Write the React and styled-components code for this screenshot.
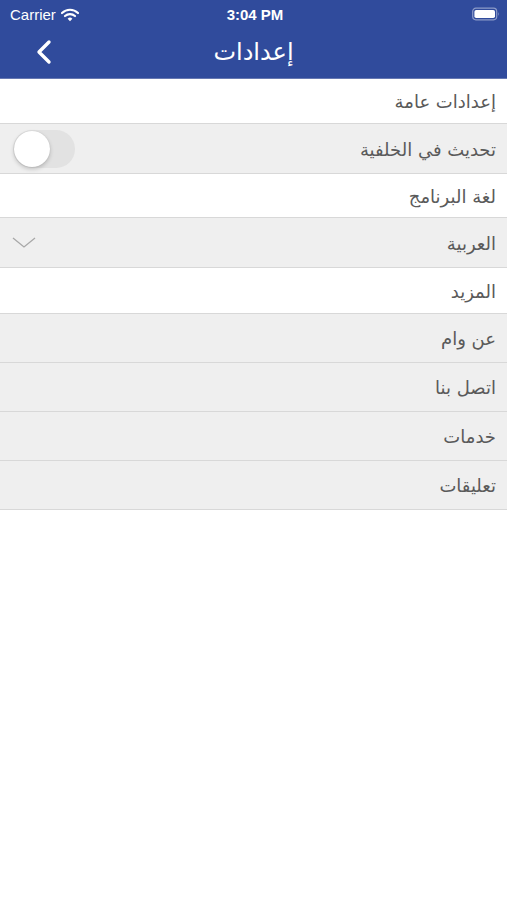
import React from 'react'
import styled, { createGlobalStyle } from 'styled-components';

const GlobalStyle = createGlobalStyle`
  html, body {
    margin: 0;
    padding: 0;
    background: #fff;
    font-family: "DejaVu Sans", "Noto Sans", sans-serif;
  }
`;

const Page = styled.div`
  width: 507px;
  min-height: 900px;
  background: #fff;
`;

const TopBar = styled.div`
  background: #304b9c;
  height: 78px;
  border-bottom: 1px solid #6678b2;
  color: #fff;
  display: flex;
  flex-direction: column;
`;

const StatusBar = styled.div`
  height: 28px;
  display: grid;
  grid-template-columns: 1fr auto 1fr;
  align-items: center;
  padding: 0 7px 0 10px;
  font-family: "Liberation Sans", Arial, sans-serif;
  font-size: 15px;
`;

const Carrier = styled.div`
  display: flex;
  align-items: center;
  gap: 5px;
  padding-top: 1px;
`;

const Clock = styled.div`
  font-weight: 600;
  padding-top: 1px;
`;

const Battery = styled.div`
  justify-self: end;
  display: flex;
  align-items: center;
`;

const NavBar = styled.div`
  flex: 1;
  display: grid;
  grid-template-columns: 80px 1fr 80px;
  align-items: center;
`;

const BackButton = styled.div`
  padding-left: 35px;
  display: flex;
  align-items: center;
  padding-bottom: 2px;
`;

const Title = styled.div`
  text-align: center;
  font-size: 24px;
  padding-bottom: 3px;
`;

const List = styled.div`
  display: flex;
  flex-direction: column;
`;

const Row = styled.div`
  direction: rtl;
  height: ${p => p.h}px;
  box-sizing: border-box;
  background: ${p => (p.section ? '#fff' : '#efefef')};
  border-bottom: 1px solid #d8d8d8;
  display: flex;
  align-items: center;
  justify-content: space-between;
  padding: 0 11px 0 12px;
`;

const Label = styled.span`
  font-size: 18px;
  color: #5a5a5a;
  padding-top: 1px;
`;

const Switch = styled.div`
  width: 62px;
  height: 38px;
  border-radius: 19px;
  background: #e2e2e2;
  display: flex;
  align-items: center;
  padding: 1px;
  box-sizing: border-box;
  margin-left: 1px;
`;

const Knob = styled.div`
  width: 36px;
  height: 36px;
  border-radius: 50%;
  background: #fff;
  box-shadow: 0 2px 4px rgba(0, 0, 0, 0.2), 0 0 1px rgba(0, 0, 0, 0.15);
  margin-right: auto;
`;

const Wifi = () => (
  <svg width="18" height="14" viewBox="0 0 18 14">
    <path d="M1 5 A11.5 11.5 0 0 1 17 5" stroke="#fff" strokeWidth="2.2" fill="none" strokeLinecap="round" />
    <path d="M4 8 A7.5 7.5 0 0 1 14 8" stroke="#fff" strokeWidth="2.2" fill="none" strokeLinecap="round" />
    <path d="M9 13.3 L6.6 10.8 A3.4 3.4 0 0 1 11.4 10.8 Z" fill="#fff" />
  </svg>
);

const BatteryIcon = () => (
  <svg width="28" height="14" viewBox="0 0 28 14">
    <rect x="0.7" y="1.2" width="24" height="11.6" rx="3.2" fill="none" stroke="rgba(255,255,255,0.45)" strokeWidth="1.2" />
    <rect x="2.4" y="2.9" width="20.6" height="8.2" rx="1.8" fill="#fff" />
    <path d="M26 5 Q27.5 7 26 9 Z" fill="rgba(255,255,255,0.45)" />
  </svg>
);

const Chevron = () => (
  <svg width="18" height="26" viewBox="0 0 18 26">
    <path d="M14 3 L4 13 L14 23" stroke="#fff" strokeWidth="3.4" fill="none" strokeLinecap="round" strokeLinejoin="round" />
  </svg>
);

const DownArrow = () => (
  <svg width="24" height="12" viewBox="0 0 24 12">
    <path d="M1 1 L12 10 L23 1" stroke="#a8a8a8" strokeWidth="1.3" fill="none" />
  </svg>
);

export default function App() {
  return (
    <Page>
      <GlobalStyle />
      <TopBar>
        <StatusBar>
          <Carrier>Carrier <Wifi /></Carrier>
          <Clock>3:04 PM</Clock>
          <Battery><BatteryIcon /></Battery>
        </StatusBar>
        <NavBar>
          <BackButton><Chevron /></BackButton>
          <Title>إعدادات</Title>
          <div />
        </NavBar>
      </TopBar>
      <List>
        <Row section h={45}><Label>إعدادات عامة</Label></Row>
        <Row h={50}>
          <Label>تحديث في الخلفية</Label>
          <Switch><Knob /></Switch>
        </Row>
        <Row section h={44}><Label>لغة البرنامج</Label></Row>
        <Row h={50}>
          <Label>العربية</Label>
          <DownArrow />
        </Row>
        <Row section h={46}><Label>المزيد</Label></Row>
        <Row h={49}><Label>عن وام</Label></Row>
        <Row h={49}><Label>اتصل بنا</Label></Row>
        <Row h={49}><Label>خدمات</Label></Row>
        <Row h={49}><Label>تعليقات</Label></Row>
      </List>
    </Page>
  )
}
